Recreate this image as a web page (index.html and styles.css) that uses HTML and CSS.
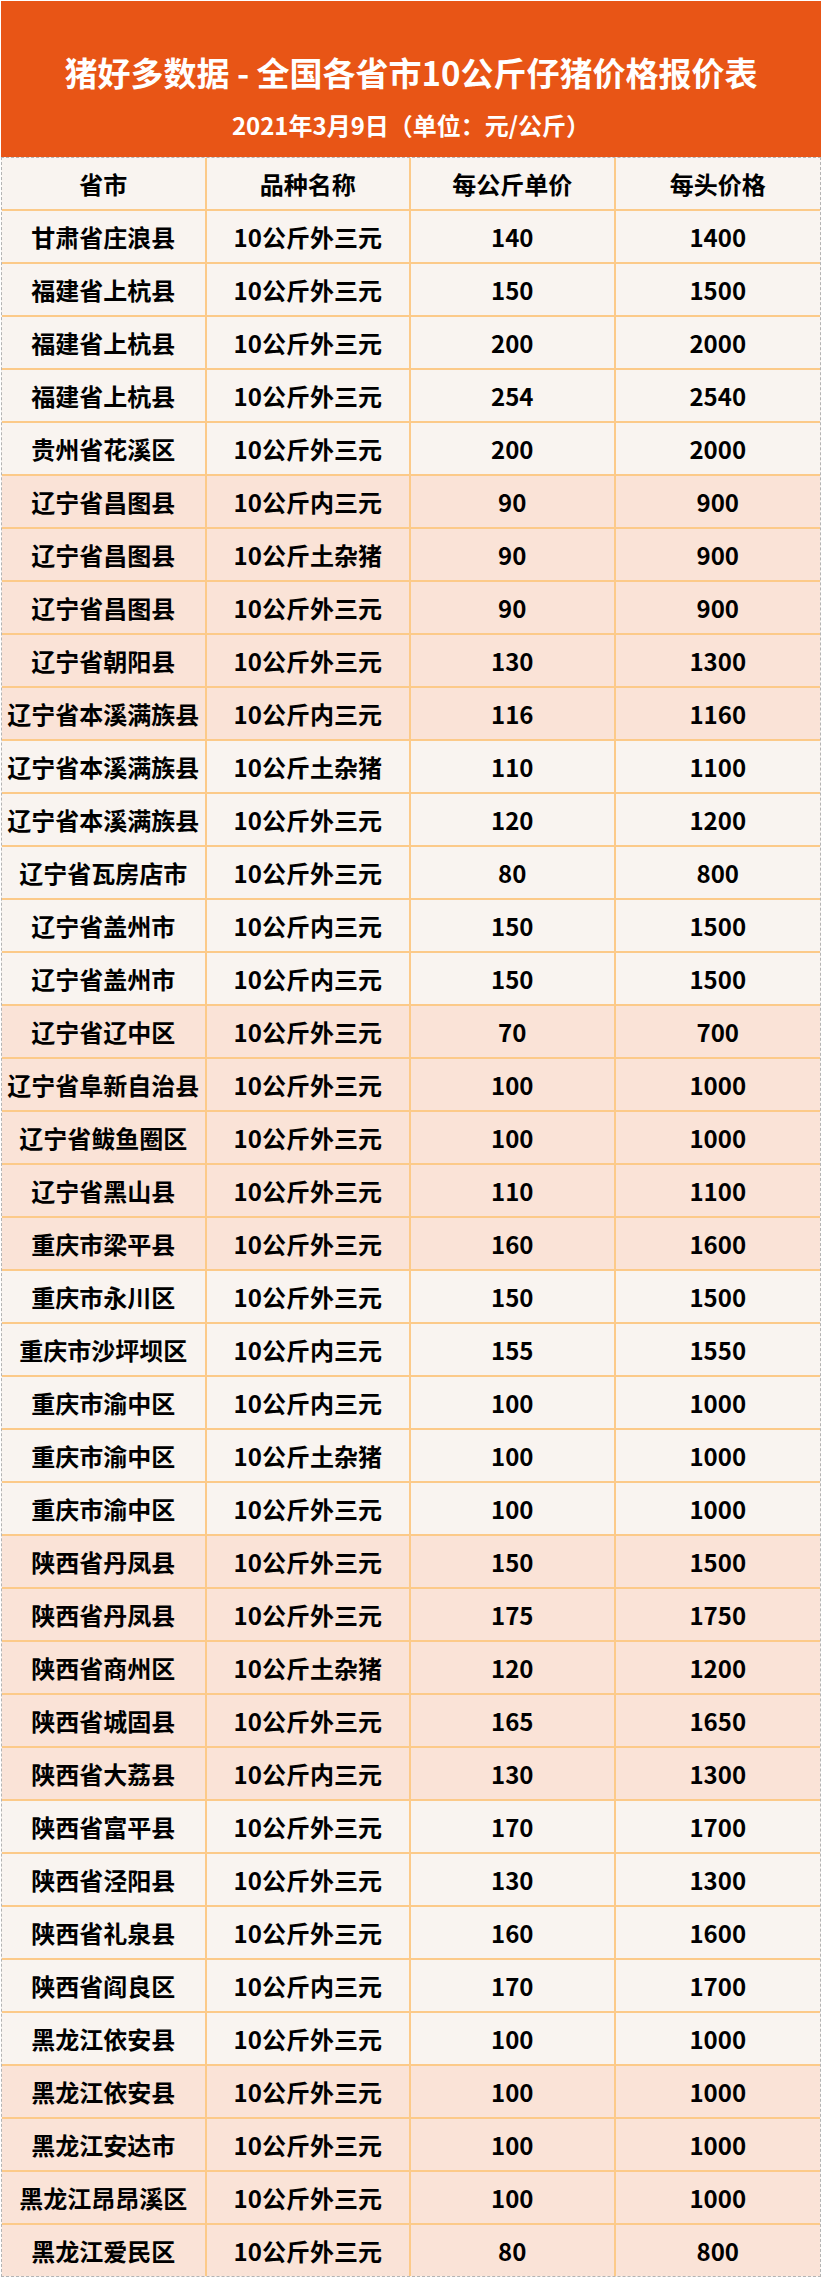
FILE: index.html
```html
<!DOCTYPE html>
<html lang="zh-CN">
<head>
<meta charset="utf-8">
<title>猪好多数据 - 全国各省市10公斤仔猪价格报价表</title>
<link rel="stylesheet" href="styles.css">
</head>
<body>
<div class="page">
  <header class="banner">
    <h1 class="title">猪好多数据 - 全国各省市10公斤仔猪价格报价表</h1>
    <p class="subtitle">2021年3月9日（单位：元/公斤）</p>
  </header>
  <table class="prices">
    <thead>
      <tr><th>省市</th><th>品种名称</th><th>每公斤单价</th><th>每头价格</th></tr>
    </thead>
    <tbody>
      <tr><td>甘肃省庄浪县</td><td>10公斤外三元</td><td>140</td><td>1400</td></tr>
      <tr><td>福建省上杭县</td><td>10公斤外三元</td><td>150</td><td>1500</td></tr>
      <tr><td>福建省上杭县</td><td>10公斤外三元</td><td>200</td><td>2000</td></tr>
      <tr><td>福建省上杭县</td><td>10公斤外三元</td><td>254</td><td>2540</td></tr>
      <tr><td>贵州省花溪区</td><td>10公斤外三元</td><td>200</td><td>2000</td></tr>
      <tr class="alt"><td>辽宁省昌图县</td><td>10公斤内三元</td><td>90</td><td>900</td></tr>
      <tr class="alt"><td>辽宁省昌图县</td><td>10公斤土杂猪</td><td>90</td><td>900</td></tr>
      <tr class="alt"><td>辽宁省昌图县</td><td>10公斤外三元</td><td>90</td><td>900</td></tr>
      <tr class="alt"><td>辽宁省朝阳县</td><td>10公斤外三元</td><td>130</td><td>1300</td></tr>
      <tr class="alt"><td>辽宁省本溪满族县</td><td>10公斤内三元</td><td>116</td><td>1160</td></tr>
      <tr><td>辽宁省本溪满族县</td><td>10公斤土杂猪</td><td>110</td><td>1100</td></tr>
      <tr><td>辽宁省本溪满族县</td><td>10公斤外三元</td><td>120</td><td>1200</td></tr>
      <tr><td>辽宁省瓦房店市</td><td>10公斤外三元</td><td>80</td><td>800</td></tr>
      <tr><td>辽宁省盖州市</td><td>10公斤内三元</td><td>150</td><td>1500</td></tr>
      <tr><td>辽宁省盖州市</td><td>10公斤内三元</td><td>150</td><td>1500</td></tr>
      <tr class="alt"><td>辽宁省辽中区</td><td>10公斤外三元</td><td>70</td><td>700</td></tr>
      <tr class="alt"><td>辽宁省阜新自治县</td><td>10公斤外三元</td><td>100</td><td>1000</td></tr>
      <tr class="alt"><td>辽宁省鲅鱼圈区</td><td>10公斤外三元</td><td>100</td><td>1000</td></tr>
      <tr class="alt"><td>辽宁省黑山县</td><td>10公斤外三元</td><td>110</td><td>1100</td></tr>
      <tr class="alt"><td>重庆市梁平县</td><td>10公斤外三元</td><td>160</td><td>1600</td></tr>
      <tr><td>重庆市永川区</td><td>10公斤外三元</td><td>150</td><td>1500</td></tr>
      <tr><td>重庆市沙坪坝区</td><td>10公斤内三元</td><td>155</td><td>1550</td></tr>
      <tr><td>重庆市渝中区</td><td>10公斤内三元</td><td>100</td><td>1000</td></tr>
      <tr><td>重庆市渝中区</td><td>10公斤土杂猪</td><td>100</td><td>1000</td></tr>
      <tr><td>重庆市渝中区</td><td>10公斤外三元</td><td>100</td><td>1000</td></tr>
      <tr class="alt"><td>陕西省丹凤县</td><td>10公斤外三元</td><td>150</td><td>1500</td></tr>
      <tr class="alt"><td>陕西省丹凤县</td><td>10公斤外三元</td><td>175</td><td>1750</td></tr>
      <tr class="alt"><td>陕西省商州区</td><td>10公斤土杂猪</td><td>120</td><td>1200</td></tr>
      <tr class="alt"><td>陕西省城固县</td><td>10公斤外三元</td><td>165</td><td>1650</td></tr>
      <tr class="alt"><td>陕西省大荔县</td><td>10公斤内三元</td><td>130</td><td>1300</td></tr>
      <tr><td>陕西省富平县</td><td>10公斤外三元</td><td>170</td><td>1700</td></tr>
      <tr><td>陕西省泾阳县</td><td>10公斤外三元</td><td>130</td><td>1300</td></tr>
      <tr><td>陕西省礼泉县</td><td>10公斤外三元</td><td>160</td><td>1600</td></tr>
      <tr><td>陕西省阎良区</td><td>10公斤内三元</td><td>170</td><td>1700</td></tr>
      <tr><td>黑龙江依安县</td><td>10公斤外三元</td><td>100</td><td>1000</td></tr>
      <tr class="alt"><td>黑龙江依安县</td><td>10公斤外三元</td><td>100</td><td>1000</td></tr>
      <tr class="alt"><td>黑龙江安达市</td><td>10公斤外三元</td><td>100</td><td>1000</td></tr>
      <tr class="alt"><td>黑龙江昂昂溪区</td><td>10公斤外三元</td><td>100</td><td>1000</td></tr>
      <tr class="alt"><td>黑龙江爱民区</td><td>10公斤外三元</td><td>80</td><td>800</td></tr>
    </tbody>
  </table>
</div>
</body>
</html>
```

FILE: styles.css
```css
html, body {
  margin: 0;
  padding: 0;
  background: #ffffff;
}

body {
  font-family: "Noto Sans CJK SC", "Noto Sans", "Liberation Sans", sans-serif;
  color: #000;
}

.page {
  width: 822px;
  box-sizing: border-box;
  padding: 1px 1px 0 1px;
}

.banner {
  background: #e85516;
  height: 156px;
  box-sizing: border-box;
  padding-top: 51px;
  display: flex;
  flex-direction: column;
  align-items: center;
  color: #fff;
}

.title {
  margin: 0;
  font-size: 33px;
  line-height: 40px;
  font-weight: 700;
  white-space: nowrap;
}

.subtitle {
  margin: 18px 0 0 0;
  font-size: 24px;
  line-height: 30px;
  font-weight: 700;
  white-space: nowrap;
}

.prices {
  width: 820px;
  table-layout: fixed;
  border-collapse: separate;
  border-spacing: 0;
  border: 1px dashed #b4b4b4;
  background: #f9f4f0;
}

.prices th,
.prices td {
  padding: 0;
  text-align: center;
  vertical-align: middle;
  font-size: 24px;
  font-weight: 700;
  line-height: 30px;
  white-space: nowrap;
  border-right: 2px solid #fcca89;
  border-bottom: 2px solid #fcca89;
  color: #000;
}

.prices th {
  height: 51px;
}

.prices td {
  height: 51px;
}

.prices th:last-child,
.prices td:last-child {
  border-right: none;
}

.prices tbody tr:last-child td {
  border-bottom: none;
}

.prices tr.alt td {
  background: #fae3d7;
}
```
